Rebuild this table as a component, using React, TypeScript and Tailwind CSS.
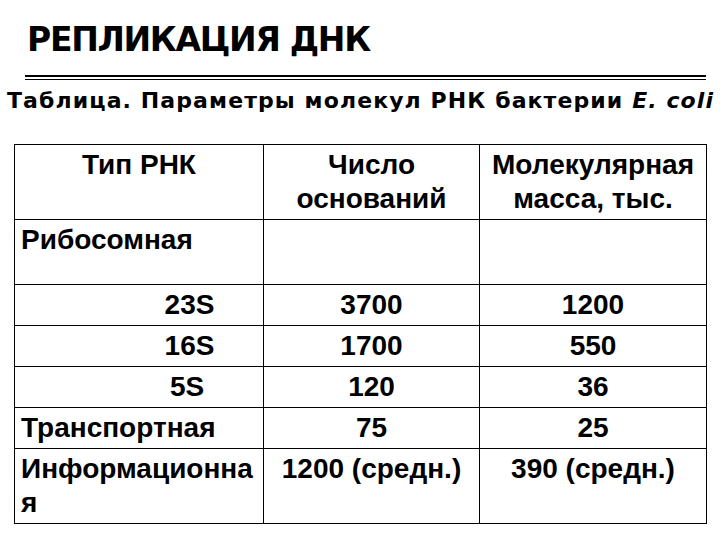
import React from "react";

const cell = "border border-black align-top px-[6px] pt-[3px] pb-[3px] leading-[34px]";

export default function App() {
  return (
    <div className="w-[720px] h-[540px] bg-white text-black overflow-hidden relative">
      <div className="pt-[20px] pl-[27px] whitespace-nowrap font-['DejaVu_Sans',sans-serif] font-bold text-[33px] leading-[40px] tracking-[-1.3px]">
        РЕПЛИКАЦИЯ ДНК
      </div>
      <div className="ml-[25px] w-[681px] mt-[15px] h-[5px] border-t-[2px] border-b border-black" />
      <div className="mt-[7px] pl-[7px] whitespace-nowrap font-['DejaVu_Sans',sans-serif] font-bold text-[22px] leading-[28px] tracking-[1.1px]">
        Таблица. Параметры молекул РНК бактерии <i>E. coli</i>
      </div>
      <table className="ml-[14px] mt-[29px] border-collapse table-fixed font-['Liberation_Sans',Arial,sans-serif] font-bold text-[28px]">
        <colgroup>
          <col className="w-[249px]" />
          <col className="w-[216px]" />
          <col className="w-[227px]" />
        </colgroup>
        <tbody>
          <tr className="h-[74px]">
            <td className={`${cell} text-center`}>Тип РНК</td>
            <td className={`${cell} text-center`}>Число<br />оснований</td>
            <td className={`${cell} text-center`}>Молекулярная<br />масса, тыс.</td>
          </tr>
          <tr className="h-[65px]">
            <td className={`${cell} text-left`}>Рибосомная</td>
            <td className={cell}></td>
            <td className={cell}></td>
          </tr>
          <tr className="h-[41px]">
            <td className={`${cell} text-center pl-[107px]`}>23S</td>
            <td className={`${cell} text-center`}>3700</td>
            <td className={`${cell} text-center`}>1200</td>
          </tr>
          <tr className="h-[41px]">
            <td className={`${cell} text-center pl-[107px]`}>16S</td>
            <td className={`${cell} text-center`}>1700</td>
            <td className={`${cell} text-center`}>550</td>
          </tr>
          <tr className="h-[40px]">
            <td className={`${cell} text-center pl-[102px]`}>5S</td>
            <td className={`${cell} text-center`}>120</td>
            <td className={`${cell} text-center`}>36</td>
          </tr>
          <tr className="h-[41px]">
            <td className={`${cell} text-left`}>Транспортная</td>
            <td className={`${cell} text-center`}>75</td>
            <td className={`${cell} text-center`}>25</td>
          </tr>
          <tr className="h-[75px]">
            <td className={`${cell} text-left`}>Информационна<br />я</td>
            <td className={`${cell} text-center whitespace-nowrap`}>1200 (средн.)</td>
            <td className={`${cell} text-center whitespace-nowrap`}>390 (средн.)</td>
          </tr>
        </tbody>
      </table>
    </div>
  );
}
